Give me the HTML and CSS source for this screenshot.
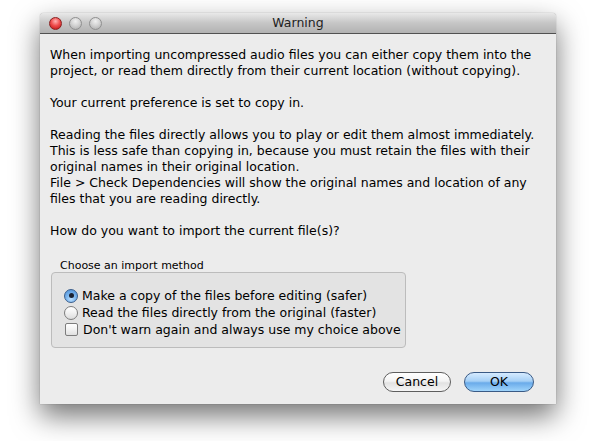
FILE: index.html
```html
<!DOCTYPE html>
<html>
<head>
<meta charset="utf-8">
<link rel="stylesheet" href="styles.css">
</head>
<body>
<div class="window">
  <div class="titlebar">
    <div class="lights">
      <span class="light red"></span>
      <span class="light grey"></span>
      <span class="light grey"></span>
    </div>
    <div class="title">Warning</div>
  </div>
  <div class="content">
    <p>When importing uncompressed audio files you can either copy them into the<br>project, or read them directly from their current location (without copying).</p>
    <p>Your current preference is set to copy in.</p>
    <p>Reading the files directly allows you to play or edit them almost immediately.<br>This is less safe than copying in, because you must retain the files with their<br>original names in their original location.<br>File &gt; Check Dependencies will show the original names and location of any<br>files that you are reading directly.</p>
    <p>How do you want to import the current file(s)?</p>
    <div class="group-label">Choose an import method</div>
    <div class="group">
      <div class="option"><span class="radio on"><span class="dot"></span></span><span>Make a copy of the files before editing (safer)</span></div>
      <div class="option"><span class="radio"></span><span>Read the files directly from the original (faster)</span></div>
      <div class="option"><span class="check"></span><span>Don't warn again and always use my choice above</span></div>
    </div>
    <div class="buttons">
      <button class="btn cancel">Cancel</button>
      <button class="btn ok">OK</button>
    </div>
  </div>
</div>
</body>
</html>
```
FILE: styles.css
```css
html, body {
  margin: 0;
  padding: 0;
  background: #ffffff;
}
body {
  width: 596px;
  height: 441px;
  overflow: hidden;
  font-family: "DejaVu Sans", "Liberation Sans", sans-serif;
  color: #000;
}
.window {
  margin: 13px 0 0 40px;
  width: 516px;
  height: 391px;
  background: #ececec;
  box-shadow: 0 12px 28px rgba(0,0,0,0.55), 0 0 1px rgba(0,0,0,0.5);
  display: flex;
  flex-direction: column;
  border-radius: 4px 4px 0 0;
}
.titlebar {
  height: 20px;
  flex: none;
  background: linear-gradient(#e9e9e9, #c6c6c6 50%, #b2b2b2);
  border-bottom: 1px solid #515151;
  border-radius: 4px 4px 0 0;
  display: flex;
  align-items: center;
  position: relative;
}
.lights {
  display: flex;
  gap: 7px;
  margin-left: 9px;
}
.light {
  width: 13px;
  height: 13px;
  border-radius: 50%;
  box-sizing: border-box;
}
.light.red {
  background: radial-gradient(circle at 50% 30%, #ffb3b3 0, #f05050 45%, #b90c0c 100%);
  border: 1px solid #8a2020;
}
.light.grey {
  background: radial-gradient(circle at 50% 30%, #f0f0f0 0, #d0d0d0 50%, #a8a8a8 100%);
  border: 1px solid #909090;
}
.title {
  position: absolute;
  left: 0;
  right: 0;
  top: 0;
  line-height: 20px;
  text-align: center;
  font-size: 12.5px;
  color: #222;
}
.content {
  padding: 13px 10px 0 10px;
  font-size: 12.5px;
  line-height: 16px;
  display: flex;
  flex-direction: column;
}
.content p {
  margin: 0 0 16px 0;
  white-space: nowrap;
}
.group-label {
  margin: 4px 0 0 10px;
  font-size: 11px;
  line-height: 14px;
}
.group {
  margin: -1px 0 0 1px;
  width: 355px;
  height: 76px;
  box-sizing: border-box;
  border: 1px solid #bcbcbc;
  border-radius: 4px;
  background: #e3e3e3;
  padding: 14px 0 0 12px;
  display: flex;
  flex-direction: column;
}
.option {
  display: flex;
  align-items: center;
  height: 17px;
  gap: 4px;
  white-space: nowrap;
}
.radio {
  width: 14px;
  height: 14px;
  border-radius: 50%;
  box-sizing: border-box;
  border: 1px solid #7d7d7d;
  background: linear-gradient(#ffffff, #f0f0f0 50%, #dcdcdc);
  display: flex;
  align-items: center;
  justify-content: center;
  flex: none;
}
.radio.on {
  border-color: #3a5e8c;
  background: radial-gradient(circle at 50% 75%, #bde0ff 0, #7fb8ef 40%, #4a8ed8 100%);
}
.dot {
  width: 5px;
  height: 5px;
  border-radius: 50%;
  background: #1a2233;
}
.check {
  width: 13px;
  height: 13px;
  box-sizing: border-box;
  border: 1px solid #7d7d7d;
  border-radius: 2px;
  background: linear-gradient(#ffffff, #f2f2f2 50%, #e0e0e0);
  margin: 0 1px 0 1px;
  flex: none;
}
.buttons {
  display: flex;
  justify-content: flex-end;
  gap: 13px;
  margin-top: 24px;
  padding-right: 12px;
}
.btn {
  height: 20px;
  border-radius: 10px;
  font-family: inherit;
  font-size: 12.5px;
  line-height: 18px;
  padding: 0;
  box-sizing: border-box;
  color: #000;
}
.cancel {
  width: 68px;
  border: 1px solid #5e5e5e;
  background: linear-gradient(#ffffff, #f4f4f4 45%, #e2e2e2 55%, #f6f6f6);
}
.ok {
  width: 70px;
  border: 1px solid #3a5a85;
  background: linear-gradient(#d6ebff, #a6d0f6 45%, #6aabea 55%, #9fd4fb);
}
```
